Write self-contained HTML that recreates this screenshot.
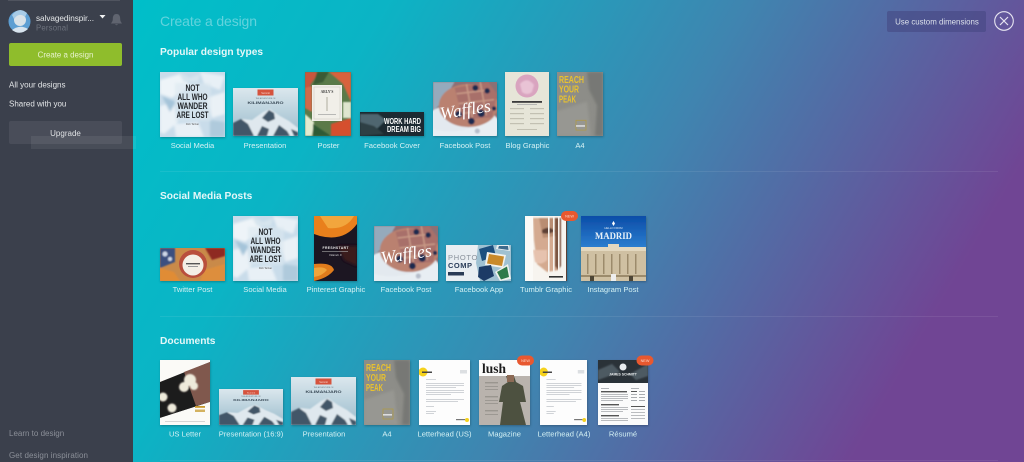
<!DOCTYPE html>
<html>
<head>
<meta charset="utf-8">
<style>
html,body{margin:0;padding:0;width:1024px;height:462px;overflow:hidden;background:#3b404d}
body{position:relative;font-family:"Liberation Sans",sans-serif}
#side{position:absolute;left:0;top:0;width:133px;height:462px;background:#3b404c}
#main{position:absolute;left:133px;top:0;width:891px;height:462px;background:linear-gradient(120deg,#00bfc9 0%,#0bb4c5 22%,#3f85b0 53%,#704594 85%,#704594 100%)}
svg#art{position:absolute;left:0;top:0;filter:blur(.35px)}
.lbl{font:7.6px "Liberation Sans",sans-serif;fill:#d4f1f4;text-anchor:middle}
.h2{font:bold 10.2px "Liberation Sans",sans-serif;fill:#e4f7f8}
.cond{font-family:"Liberation Sans Narrow","Liberation Sans",sans-serif;font-weight:bold}
.new{font:3.8px "Liberation Sans",sans-serif;fill:#fbd9cc;text-anchor:middle}
</style>
</head>
<body>
<div id="side"></div>
<div id="main"></div>
<svg id="art" width="1024" height="462" viewBox="0 0 1024 462" xmlns="http://www.w3.org/2000/svg">
<defs>
<filter id="sh" x="-10%" y="-10%" width="125%" height="125%"><feDropShadow dx="0.5" dy="1" stdDeviation="1" flood-color="#000" flood-opacity=".25"/></filter>
<filter id="b3" x="-10%" y="-10%" width="120%" height="120%"><feGaussianBlur stdDeviation=".8"/></filter>
<filter id="b2" x="-20%" y="-20%" width="140%" height="140%"><feGaussianBlur stdDeviation="1.4"/></filter>
<linearGradient id="sky" x1="0" y1="0" x2="0" y2="1"><stop offset="0" stop-color="#dbe7ed"/><stop offset=".55" stop-color="#b7cfdb"/><stop offset="1" stop-color="#9dbccb"/></linearGradient>
<linearGradient id="blue" x1="0" y1="0" x2="0" y2="1"><stop offset="0" stop-color="#0b4da8"/><stop offset="1" stop-color="#2c7fd0"/></linearGradient>

<symbol id="social" viewBox="0 0 65 65" width="65" height="65">
<rect width="65" height="65" fill="#c9dcea"/>
<g filter="url(#b2)">
<path d="M0 8L20 2L30 14L12 26L0 22Z" fill="#eef4f8"/><path d="M40 0L65 4L60 18L44 12Z" fill="#e8f0f6"/>
<path d="M0 34L14 30L18 50L4 62L0 60Z" fill="#ebf2f7"/><path d="M46 26L65 20V42L52 46Z" fill="#eaf1f6"/>
<path d="M14 52L38 50L44 65H16Z" fill="#e8f0f6"/><path d="M50 48L65 50V65H50Z" fill="#afcadc"/>
<path d="M2 24L16 30L10 40Z" fill="#a5c4d9"/><path d="M22 20L30 44L20 40Z" fill="#b8d1e0"/>
<path d="M18 0L30 6L40 2L38 10L24 10Z" fill="#d7e5ee"/>
</g>
<rect x="15" y="11" width="36" height="38" fill="#dce8f0" opacity=".6" filter="url(#b2)"/>
<g class="cond" fill="#24262a" font-size="9.6" text-anchor="middle">
<text x="32.5" y="19" textLength="14" lengthAdjust="spacingAndGlyphs">NOT</text>
<text x="32.5" y="28" textLength="30" lengthAdjust="spacingAndGlyphs">ALL WHO</text>
<text x="32.5" y="37" textLength="30" lengthAdjust="spacingAndGlyphs">WANDER</text>
<text x="32.5" y="46" textLength="32" lengthAdjust="spacingAndGlyphs">ARE LOST</text>
</g>
<text x="32.5" y="53" font-size="2.6" fill="#555" text-anchor="middle">Rob Tarzan</text>
</symbol>

<symbol id="pres" viewBox="0 0 65 48" width="65" height="48" preserveAspectRatio="none">
<rect width="65" height="48" fill="url(#sky)"/>
<rect x="24.500" y="1.500" width="16" height="6" fill="#d5523c"/>
<text x="32.500" y="6" font-size="2.500" fill="#f6d8d0" text-anchor="middle">Summit</text>
<text x="32.500" y="11" font-size="2" fill="#66767f" text-anchor="middle">THE ADVENTURE OF</text>
<text x="32.500" y="16" font-size="4" font-weight="bold" fill="#3a4b58" text-anchor="middle" textLength="36" lengthAdjust="spacingAndGlyphs">KILIMANJARO</text>
<g filter="url(#b3)">
<path d="M0 37L10 31L19 32L30 24L37 21L47 28L56 33L65 40V48H0Z" fill="#dfe8ee"/>
<path d="M0 48V35L8 31L15 36L21 48ZM24 48L29 38L36 41L34 48ZM29 30L36 22L41 25L42 31L35 34ZM40 48L46 37L54 43L57 48ZM58 41L65 44V48H61Z" fill="#435768"/>
</g>
</symbol>

<symbol id="waffle" viewBox="0 0 65 55" width="65" height="55" preserveAspectRatio="none">
<rect width="65" height="55" fill="#8c6f74"/>
<g filter="url(#b3)">
<path d="M0 0H22L10 20L0 30Z" fill="#95aabc"/>
<ellipse cx="28" cy="46" rx="40" ry="24" fill="#e3e9ef"/>
<ellipse cx="36" cy="24" rx="30" ry="22" fill="#ba8170"/>
<path d="M22 6L56 0L65 12L60 36L30 38Z" fill="#a8706a"/>
<path d="M24 12L58 8M26 22L62 18M30 32L60 28M34 2L40 36M48 0L54 34" stroke="#c99a86" stroke-width="1.500" fill="none"/>
<g fill="#1f2c50"><circle cx="43" cy="6" r="3"/><circle cx="55" cy="9" r="2.800"/><circle cx="26" cy="33" r="3.600"/><circle cx="39" cy="40" r="3.400"/><circle cx="49" cy="32" r="3.800"/><circle cx="45" cy="50" r="2.600"/><circle cx="62" cy="27" r="2.200"/></g>
<path d="M0 48Q30 56 65 36V55H0Z" fill="#eaeff4" opacity=".75"/>
</g>
<text x="33" y="34" font-family="Liberation Serif,serif" font-style="italic" font-size="18" fill="#fff" text-anchor="middle" textLength="52" lengthAdjust="spacingAndGlyphs" transform="rotate(-9 33 30)">Waffles</text>
</symbol>

<symbol id="a4" viewBox="0 0 46 65" width="46" height="65" preserveAspectRatio="none">
<rect width="46" height="65" fill="#8d8d88"/>
<g filter="url(#b2)">
<path d="M30 0H46V65H38L40 34L32 18Z" fill="#777875"/>
<path d="M0 40L30 30L34 65H0Z" fill="#979792"/>
</g>
<g class="cond" fill="#e9c22e" font-size="10.500"><text x="2" y="11" textLength="25" lengthAdjust="spacingAndGlyphs">REACH</text><text x="2" y="21" textLength="20" lengthAdjust="spacingAndGlyphs">YOUR</text><text x="2" y="31" textLength="17" lengthAdjust="spacingAndGlyphs">PEAK</text></g>
<rect x="19" y="49" width="10" height="10" fill="none" stroke="#b39a3e" stroke-width=".7"/>
<rect x="19" y="54" width="9" height="1.600" fill="#ddd"/>
</symbol>

<symbol id="letter" viewBox="0 0 51 65" width="51" height="65" preserveAspectRatio="none">
<rect width="51" height="65" fill="#fdfdfd"/>
<circle cx="4" cy="12" r="4.500" fill="#f6d21f"/>
<rect x="3" y="11.500" width="10" height="1.500" fill="#444"/>
<rect x="41" y="10" width="7" height="3.500" fill="#dcdfe2"/>
<g fill="#d0d3d7"><rect x="7" y="19" width="10" height=".9"/><rect x="7" y="23" width="38" height="1"/><rect x="7" y="25" width="38" height="1"/><rect x="7" y="27" width="30" height="1"/><rect x="7" y="30" width="38" height="1"/><rect x="7" y="32" width="38" height="1"/><rect x="7" y="34" width="25" height="1"/><rect x="7" y="39" width="38" height="1"/><rect x="7" y="41" width="32" height="1"/><rect x="7" y="46" width="8" height="1"/><rect x="7" y="51" width="10" height="1"/><rect x="7" y="53" width="8" height="1"/></g>
<rect x="37" y="59" width="9" height="1.200" fill="#777"/><circle cx="48" cy="60" r="2" fill="#f6d21f"/>
</symbol>
</defs>

<!-- sidebar -->
<rect x="8" y="0" width="112" height="1" fill="#50545f"/>
<rect x="9" y="43" width="113" height="23" rx="2" fill="#8fbd2c"/>
<rect x="9" y="121" width="113" height="23" rx="2" fill="#494d59"/>
<rect x="31" y="136" width="105" height="13" fill="#fff" opacity=".07"/>
<g>
<circle cx="19.500" cy="21.500" r="11" fill="#5d9ed2"/>
<circle cx="20" cy="20" r="6" fill="#d9e2e8"/>
<path d="M12 15Q19 6 27 13L25 17Q19 12 14 19Z" fill="#a8cbe6"/>
<path d="M12 30Q20 24 28 29Q20 36 12 30Z" fill="#d8e4ee"/>
</g>
<text x="36" y="21" font-size="8.200" fill="#e6e8ea" textLength="58">salvagedinspir...</text>
<text x="36" y="30.500" font-size="7.800" fill="#6e737e" textLength="32">Personal</text>
<path d="M99.500 15H105.500L102.500 18.500Z" fill="#f1f2f3"/>
<path d="M116.500 14C113.500 14 112.800 16.500 112.800 19C112.800 21.500 111.500 22.500 111 23.500H122C121.500 22.500 120.200 21.500 120.200 19C120.200 16.500 119.500 14 116.500 14ZM115 24.300H118Q116.500 26.300 115 24.300Z" fill="#60646f"/>
<text x="65.500" y="57.500" font-size="7.900" fill="#e8f3cf" text-anchor="middle">Create a design</text>
<text x="9" y="87.500" font-size="8" fill="#e3e5e7">All your designs</text>
<text x="9" y="106.500" font-size="8" fill="#e3e5e7">Shared with you</text>
<text x="65.500" y="136" font-size="8" fill="#e3e5e7" text-anchor="middle">Upgrade</text>
<text x="9" y="436" font-size="8" fill="#8b8f98">Learn to design</text>
<text x="9" y="458" font-size="8" fill="#8b8f98" textLength="79">Get design inspiration</text>

<!-- top -->
<text x="160" y="26" font-size="14" fill="#62d3dd" textLength="97">Create a design</text>
<rect x="887" y="11" width="99" height="21" rx="2" fill="#43457f" opacity=".55"/>
<text x="937" y="24.500" font-size="7.900" fill="#dbe0ea" text-anchor="middle">Use custom dimensions</text>
<circle cx="1004" cy="21" r="9.300" fill="none" stroke="#e6e4f0" stroke-width="1.100"/>
<path d="M1000 17L1008 25M1008 17L1000 25" stroke="#e6e4f0" stroke-width="1.200"/>

<!-- headings & dividers -->
<text class="h2" x="160" y="55">Popular design types</text>
<text class="h2" x="160" y="199">Social Media Posts</text>
<text class="h2" x="160" y="344">Documents</text>
<rect x="160" y="171" width="838" height="1" fill="#fff" opacity=".08"/>
<rect x="160" y="316" width="838" height="1" fill="#fff" opacity=".08"/>
<rect x="160" y="460" width="838" height="1" fill="#fff" opacity=".08"/>

<!-- ROW 1 -->
<g filter="url(#sh)">
<use href="#social" x="160" y="72" width="65" height="65"/>
<use href="#pres" x="233" y="88" width="65" height="48"/>
<!-- poster -->
<svg x="305" y="72" width="46" height="64" viewBox="0 0 46 64">
<rect width="46" height="64" fill="#5a7a4a"/>
<g filter="url(#b3)">
<path d="M0 0H14L6 12L0 24Z" fill="#c9543c"/><path d="M12 0H24L18 10L8 13Z" fill="#3a5a34"/><path d="M24 0H46V30L38 12Z" fill="#d8623e"/>
<path d="M0 16L7 14V40L0 36Z" fill="#d06a4c"/>
<path d="M0 42L9 50L7 64H0Z" fill="#e3ebd0"/><path d="M26 52L46 46V64H26Z" fill="#d5502f"/>
<path d="M8 52L26 64H8Z" fill="#2f5a35"/><path d="M38 30H46V46H38Z" fill="#dfe6cf"/>
</g>
<rect x="7" y="13" width="30" height="36" fill="#f1efe9"/>
<rect x="9" y="15" width="26" height="32" fill="none" stroke="#c9c6bb" stroke-width=".5"/>
<text x="22" y="21" font-size="3.600" font-family="Liberation Serif,serif" font-weight="bold" fill="#444" text-anchor="middle">ARLY'S</text>
<rect x="21.500" y="25" width="1" height="14" fill="#b0ac9f"/>
<rect x="13" y="42" width="18" height=".8" fill="#aaa"/>
</svg>
<!-- fb cover -->
<svg x="360" y="112" width="64" height="24" viewBox="0 0 64 24">
<rect width="64" height="24" fill="#1c2a30"/>
<g filter="url(#b3)">
<path d="M0 2H18L26 8L18 16L6 20L0 18Z" fill="#4f6670"/>
<path d="M0 10L14 14L24 22L0 24Z" fill="#2e4045"/>
</g>
<g class="cond" fill="#fff" font-size="7.800" text-anchor="end">
<text x="61" y="12" textLength="37" lengthAdjust="spacingAndGlyphs">WORK HARD</text>
<text x="61" y="20" textLength="34" lengthAdjust="spacingAndGlyphs">DREAM BIG</text></g>
</svg>
<use href="#waffle" x="433" y="82" width="64" height="54"/>
<!-- blog -->
<svg x="505" y="72" width="44" height="64" viewBox="0 0 44 64">
<rect width="44" height="64" fill="#e6e5d8"/>
<circle cx="22" cy="14" r="11.500" fill="#d9a4bf"/>
<path d="M15 12Q22 4 29 13L27 20Q22 24 17 20Z" fill="#e9c3d5" filter="url(#b3)"/>
<rect x="7" y="29" width="30" height="1.800" fill="#3b3b3b"/>
<rect x="12" y="32" width="20" height=".8" fill="#aaa"/>
<g fill="#c2c0b2"><rect x="5" y="36" width="14" height="1.200"/><rect x="25" y="36" width="14" height="1.200"/><rect x="5" y="41" width="14" height="1.200"/><rect x="25" y="41" width="14" height="1.200"/><rect x="5" y="46" width="14" height="1.200"/><rect x="25" y="46" width="14" height="1.200"/><rect x="5" y="51" width="14" height="1.200"/><rect x="25" y="51" width="14" height="1.200"/><rect x="12" y="57" width="20" height="1"/></g>
</svg>
<use href="#a4" x="557" y="72" width="46" height="64"/>
</g>
<g>
<text class="lbl" x="192.500" y="148">Social Media</text>
<text class="lbl" x="265" y="148">Presentation</text>
<text class="lbl" x="328.500" y="148">Poster</text>
<text class="lbl" x="392" y="148">Facebook Cover</text>
<text class="lbl" x="465" y="148">Facebook Post</text>
<text class="lbl" x="527.500" y="148">Blog Graphic</text>
<text class="lbl" x="580" y="148">A4</text>
</g>

<!-- ROW 2 -->
<g filter="url(#sh)">
<!-- twitter -->
<svg x="160" y="248" width="65" height="33" viewBox="0 0 65 33">
<rect width="65" height="33" fill="#c98a4a"/>
<g filter="url(#b3)">
<path d="M0 0H15V14L0 20Z" fill="#3a4f80"/>
<circle cx="5" cy="6" r="2.500" fill="#cfd8e8"/><circle cx="10" cy="11" r="2" fill="#cfd8e8"/>
<path d="M45 0H65V8L52 12Z" fill="#8e2a22"/>
<path d="M0 20L14 24L20 33H0Z" fill="#e08c34"/><path d="M44 22L65 16V33H40Z" fill="#dd8e3e"/>
</g>
<circle cx="33" cy="16" r="14" fill="#b9503c"/>
<circle cx="33" cy="17" r="10.500" fill="#f4efe6"/>
<rect x="26" y="15" width="14" height="1.400" fill="#555"/><rect x="28" y="18" width="10" height="1" fill="#999"/>
</svg>
<use href="#social" x="233" y="216" width="65" height="65"/>
<!-- pinterest -->
<svg x="314" y="216" width="43" height="65" viewBox="0 0 43 65">
<rect width="43" height="65" fill="#1a1220"/>
<path d="M0 0H43V8Q30 26 6 20L0 18Z" fill="#e9801c"/>
<path d="M6 0H40Q32 14 14 12Z" fill="#f2a63d"/>
<path d="M0 48Q18 46 20 54Q14 62 0 65Z" fill="#e07c1f"/>
<path d="M0 52Q10 50 13 54Q8 60 0 61Z" fill="#f0a43a"/>
<path d="M24 30H43V50L30 44Z" fill="#3a1a1c" filter="url(#b2)"/>
<text x="21.500" y="33" font-size="3.400" font-weight="bold" fill="#eee" text-anchor="middle" textLength="26">FRESHSTART</text>
<rect x="8" y="35" width="26" height=".6" fill="#aaa"/>
<text x="21.500" y="40" font-size="3" font-style="italic" fill="#ddd" text-anchor="middle">Vitamin C</text>
</svg>
<use href="#waffle" x="374" y="226" width="64" height="55"/>
<!-- fb app -->
<svg x="446" y="245" width="65" height="36" viewBox="0 0 65 36">
<rect width="65" height="36" fill="#e9eef2"/>
<path d="M32 0H65V36H34L30 18Z" fill="#9fc1d2"/>
<text x="2" y="15" font-size="7.500" letter-spacing=".7" fill="#8a929c">PHOTO</text>
<text x="2" y="23" font-size="7.500" font-weight="bold" letter-spacing=".5" fill="#2c3e5a">COMP</text>
<rect x="2" y="27" width="16" height="3.500" fill="#2c3a55"/>
<path d="M33 4L47 0L50 11L36 16Z" fill="#1c4f7e"/>
<path d="M41 7L60 10L57 23L39 20Z" fill="#f3f2ec"/><path d="M43 9L58 11.500L56 21L41 18.500Z" fill="#c98a2c"/>
<path d="M51 0H63L64 6L50 4Z" fill="#e8eef0"/><path d="M53 1H62L62.500 5L52 3.500Z" fill="#3e6a8c"/>
<path d="M33 22L45 20L48 31L38 36L32 32Z" fill="#1b3a66"/>
<path d="M49 27L62 19L65 34L54 36Z" fill="#f0f2ee"/><path d="M51 27L61 21.500L63 32L55 34.500Z" fill="#2d7a48"/>
</svg>
<!-- tumblr -->
<svg x="525" y="216" width="42" height="65" viewBox="0 0 42 65">
<rect width="42" height="65" fill="#f7f4ef"/>
<g filter="url(#b3)">
<path d="M8 2H30L34 10V54L22 56L12 48L9 24Z" fill="#d4aa90"/>
<path d="M14 2H30L30 20L18 22Z" fill="#b98d72"/>
<path d="M17 14Q24 9 30 15Q24 19 17 17Z" fill="#5d4034"/>
<path d="M8 34H22V44Q16 50 10 46Z" fill="#e6c2ae"/>
<path d="M30 2H36V50L33 54L30 50Z" fill="#7a5240"/>
</g>
<path d="M0 0H8V65H0Z" fill="#fbfaf7"/>
<g fill="#f7f4ef"><rect x="23" y="0" width="1.600" height="58"/><rect x="28" y="0" width="1.600" height="60"/><rect x="33" y="0" width="1.600" height="56"/></g>
<rect x="24" y="60" width="14" height="1.600" fill="#333"/>
<rect x="41" y="0" width="1" height="65" fill="#5b3f34"/>
</svg>
<!-- instagram -->
<svg x="581" y="216" width="65" height="65" viewBox="0 0 65 65">
<rect width="65" height="32" fill="url(#blue)"/>
<rect y="31" width="65" height="34" fill="#cfc0a2"/>
<g fill="#fff"><path d="M32.500 5L34 7.500L32.500 10L31 7.500Z"/></g>
<text x="32.500" y="13" font-size="2.800" fill="#dbe8f5" text-anchor="middle">HELLO FROM</text>
<text x="32.500" y="23" font-size="9" font-family="Liberation Serif,serif" font-weight="bold" fill="#e8f0f8" text-anchor="middle" textLength="37" lengthAdjust="spacingAndGlyphs">MADRID</text>
<g fill="#e3d8bf"><rect y="31" width="65" height="4"/><rect x="27" y="28" width="11" height="6"/></g>
<g fill="#9c8b6c"><rect x="6" y="38" width="1.500" height="20"/><rect x="14" y="38" width="1.500" height="20"/><rect x="22" y="38" width="1.500" height="20"/><rect x="30" y="38" width="1.500" height="20"/><rect x="38" y="38" width="1.500" height="20"/><rect x="46" y="38" width="1.500" height="20"/><rect x="54" y="38" width="1.500" height="20"/><rect x="0" y="59" width="65" height="2"/></g>
<g fill="#4d4536"><rect x="9" y="60" width="4" height="5"/><rect x="30" y="58" width="5" height="7" fill="#eee"/><rect x="48" y="60" width="4" height="5"/></g>
</svg>
</g>
<rect x="561" y="211" width="17" height="10" rx="5" fill="#e8582f"/>
<text class="new" x="569.500" y="217.400">NEW</text>
<g>
<text class="lbl" x="192.500" y="292">Twitter Post</text>
<text class="lbl" x="265" y="292">Social Media</text>
<text class="lbl" x="336" y="292">Pinterest Graphic</text>
<text class="lbl" x="406" y="292">Facebook Post</text>
<text class="lbl" x="479" y="292">Facebook App</text>
<text class="lbl" x="546" y="292">Tumblr Graphic</text>
<text class="lbl" x="613" y="292">Instagram Post</text>
</g>

<!-- ROW 3 -->
<g filter="url(#sh)">
<!-- us letter -->
<svg x="160" y="360" width="50" height="65" viewBox="0 0 50 65">
<rect width="50" height="65" fill="#fbfaf7"/>
<path d="M0 22L50 2V42L0 58Z" fill="#1e1c1c"/>
<path d="M24 12L50 2V42L36 46Z" fill="#80594e"/>
<g fill="#eeeada" filter="url(#b3)"><circle cx="30" cy="20" r="6"/><circle cx="24" cy="27" r="5"/><circle cx="34" cy="26" r="4"/><circle cx="3" cy="37" r="4.500"/><circle cx="12" cy="48" r="4.500"/></g>
<path d="M0 58L50 42V65H0Z" fill="#fbfaf7"/>
<rect x="35" y="46" width="10" height="1.800" fill="#c79a2e"/>
<rect x="35" y="49.500" width="10" height="2.500" fill="#c79a2e" opacity=".75"/>
<rect x="5" y="61" width="40" height=".8" fill="#ccc"/>
</svg>
<use href="#pres" x="219" y="389" width="64" height="36"/>
<use href="#pres" x="291" y="377" width="65" height="48"/>
<use href="#a4" x="364" y="360" width="46" height="65"/>
<use href="#letter" x="419" y="360" width="51" height="65"/>
<!-- magazine -->
<svg x="479" y="360" width="51" height="65" viewBox="0 0 51 65">
<rect width="51" height="65" fill="#b9b3ad"/>
<rect width="51" height="16" fill="#fbfbfa"/>
<text x="3" y="13" font-family="Liberation Serif,serif" font-weight="bold" font-size="13.500" fill="#1c1c1c" textLength="24" lengthAdjust="spacingAndGlyphs">lush</text>
<path d="M27 16H35L37 22L44 26L47 42L41 42L47 65H21L24 42L20 42L23 26L29 22Z" fill="#4d5140"/>
<path d="M28 15H35V22H28Z" fill="#8c6a55"/>
<g fill="#9a968f"><rect x="6" y="22" width="13" height="1.400"/><rect x="6" y="26" width="13" height=".9"/><rect x="6" y="29" width="13" height=".9"/><rect x="6" y="36" width="13" height="1.400"/><rect x="6" y="40" width="13" height=".9"/><rect x="6" y="43" width="13" height=".9"/><rect x="6" y="50" width="13" height="1.400"/><rect x="6" y="54" width="13" height=".9"/></g>
</svg>
<use href="#letter" x="540" y="360" width="47" height="65"/>
<!-- resume -->
<svg x="598" y="360" width="50" height="65" viewBox="0 0 50 65">
<rect width="50" height="65" fill="#fbfbfb"/>
<rect width="50" height="23" fill="#2b3339"/>
<path d="M0 10L14 4L22 12L0 20ZM32 14L50 4V16L38 20Z" fill="#4d5a62" filter="url(#b3)"/>
<circle cx="25" cy="7" r="3.500" fill="#e9edef"/>
<text x="25" y="15.500" font-size="3.400" font-weight="bold" fill="#eef1f2" text-anchor="middle">JAMES SCHMITT</text>
<g fill="#a9acb0"><rect x="3" y="28" width="8" height=".9"/><rect x="3" y="31" width="26" height="1.400" fill="#555"/><rect x="3" y="34" width="27" height=".8"/><rect x="3" y="36" width="27" height=".8"/><rect x="3" y="38" width="27" height=".8"/><rect x="3" y="40" width="22" height=".8"/><rect x="3" y="44" width="18" height="1.400" fill="#555"/><rect x="3" y="47" width="27" height=".8"/><rect x="3" y="49" width="27" height=".8"/><rect x="3" y="51" width="22" height=".8"/><rect x="3" y="55" width="18" height="1.400" fill="#555"/><rect x="3" y="58" width="27" height=".8"/><rect x="3" y="60" width="27" height=".8"/>
<rect x="33" y="28" width="8" height=".9"/><rect x="33" y="31" width="6" height="1" fill="#555"/><rect x="41" y="31" width="6" height="1"/><rect x="33" y="34" width="6" height="1"/><rect x="41" y="34" width="6" height="1"/><rect x="33" y="37" width="6" height="1"/><rect x="41" y="37" width="6" height="1"/><rect x="33" y="40" width="6" height="1"/><rect x="41" y="40" width="6" height="1"/><rect x="33" y="46" width="14" height="1" fill="#555"/><rect x="33" y="49" width="14" height=".8"/><rect x="33" y="52" width="14" height=".8"/><rect x="33" y="55" width="14" height=".8"/><rect x="33" y="58" width="14" height=".8"/></g>
</svg>
</g>
<rect x="517" y="355.500" width="17" height="10" rx="5" fill="#e8582f"/>
<text class="new" x="525.500" y="361.900">NEW</text>
<rect x="636.500" y="355.500" width="17" height="10" rx="5" fill="#e8582f"/>
<text class="new" x="645" y="361.900">NEW</text>
<g>
<text class="lbl" x="185" y="436.500">US Letter</text>
<text class="lbl" x="251" y="436.500">Presentation (16:9)</text>
<text class="lbl" x="324" y="436.500">Presentation</text>
<text class="lbl" x="387" y="436.500">A4</text>
<text class="lbl" x="444.500" y="436.500">Letterhead (US)</text>
<text class="lbl" x="504.500" y="436.500">Magazine</text>
<text class="lbl" x="564" y="436.500">Letterhead (A4)</text>
<text class="lbl" x="623" y="436.500">Résumé</text>
</g>
</svg>
</body>
</html>
